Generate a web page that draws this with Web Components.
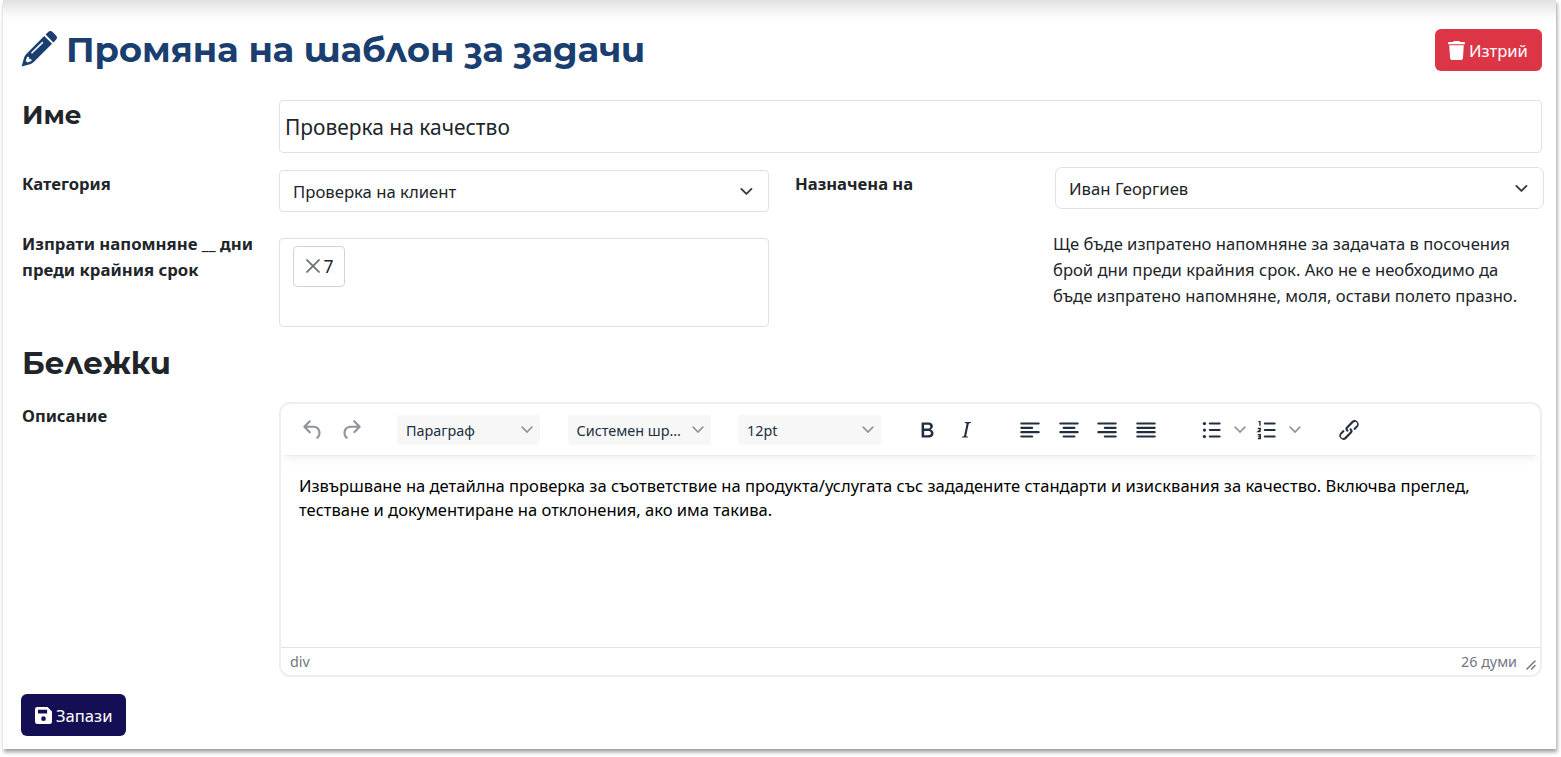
<!DOCTYPE html>
<html lang="bg">
<head>
<meta charset="utf-8">
<title>Промяна на шаблон за задачи</title>
<style>
  body {
    margin: 0;
    background: #ffffff;
    color: #212529;
    font-family: "Noto Sans", "Open Sans", sans-serif;
    font-size: 16.6px;
    overflow: hidden;
  }
</style>
</head>
<body>
<template-page></template-page>

<script>
(function () {
  const icons = {
    pencil: {
      box: "0 0 36 36",
      body: `<path fill="currentColor" d="M24.600 3.600 27.200 1c1.300-1.300 3.100-1.300 4.400 0l3.400 3.400c1.300 1.300 1.300 3.100 0 4.400L32.400 11.400z"/>
             <path fill="currentColor" d="M23.200 5 31 12.800 13 30.800Q11.300 32.500 9 33.200L.6 35.600 3 27Q3.700 24.500 5.300 22.900z"/>
             <path fill="none" stroke="#ffffff" stroke-width="1.600" stroke-linecap="round" d="M11 21.800 21.400 11.600"/>
             <path fill="#ffffff" d="M6.200 25.800 8.200 26v2.100l2.200.2.100 1.700-4.100 1.500-1.700-1.600z"/>`,
    },
    trash: {
      box: "0 0 16 18",
      body: `<path fill="currentColor" d="M5.400 0h5.200l.8 1H15.200a.8.8 0 0 1 .8.800V3H0V1.800A.8.800 0 0 1 .8 1H4.600zM1.100 4h13.800l-.8 12.300a1.800 1.800 0 0 1-1.800 1.700H3.700a1.800 1.800 0 0 1-1.800-1.700z"/>`,
    },
    save: {
      box: "0 0 16 16",
      body: `<path fill="currentColor" fill-rule="evenodd" d="M2.200 0h9.600l4.200 4.200v9.600a2.200 2.200 0 0 1-2.200 2.200H2.200A2.200 2.200 0 0 1 0 13.800V2.200A2.200 2.200 0 0 1 2.200 0zM2.800 2.500v3.700h8.600V2.500zM8 8.800a2.200 2.200 0 1 0 0 4.400 2.200 2.200 0 0 0 0-4.400z"/>`,
    },
    chevron: {
      box: "0 0 16 16",
      body: `<path fill="none" stroke="currentColor" stroke-width="2" stroke-linecap="round" stroke-linejoin="round" d="m2.500 5.200 5.400 5.400 5.400-5.400"/>`,
    },
    close: {
      box: "0 0 14 14",
      body: `<path fill="none" stroke="currentColor" stroke-width="1.700" d="M.5.500l13 13M13.500.500l-13 13"/>`,
    },
    caret: {
      box: "0 0 12 8",
      body: `<path fill="none" stroke="currentColor" stroke-width="1.700" stroke-linecap="round" d="m1.200 1.200 4.800 4.800 4.800-4.800"/>`,
    },
    undo: {
      box: "0 0 24 24",
      body: `<path fill="currentColor" d="M6.400 8H12c3.700 0 6.200 2 6.800 5.100.6 2.700-.4 5.600-2.300 6.800a1 1 0 0 1-1-1.800c1.100-.6 1.800-2.700 1.400-4.600-.5-2.100-2.100-3.500-4.900-3.500H6.400l3.300 3.300a1 1 0 1 1-1.400 1.400l-5-5a1 1 0 0 1 0-1.400l5-5a1 1 0 0 1 1.400 1.400L6.400 8Z"/>`,
    },
    redo: {
      box: "0 0 24 24",
      body: `<path fill="currentColor" d="M17.600 10H12c-2.800 0-4.400 1.400-4.900 3.500-.4 2 .3 4 1.400 4.600a1 1 0 1 1-1 1.800c-2-1.200-2.900-4.100-2.300-6.800.6-3 3-5.100 6.800-5.100h5.600l-3.300-3.300a1 1 0 1 1 1.400-1.400l5 5a1 1 0 0 1 0 1.400l-5 5a1 1 0 0 1-1.400-1.400l3.300-3.300Z"/>`,
    },
    bold: {
      box: "0 0 24 24",
      body: `<path fill="currentColor" fill-rule="evenodd" d="M7.800 19c-.3 0-.5 0-.6-.2l-.2-.5V5.700c0-.2 0-.4.2-.5l.6-.2h5c1.500 0 2.700.3 3.500 1 .7.600 1.100 1.400 1.100 2.500a3 3 0 0 1-.6 1.900c-.4.600-1 1-1.600 1.200.4.100.9.300 1.300.6s.8.700 1 1.200c.4.400.5 1 .5 1.600 0 1.300-.4 2.300-1.300 3-.8.700-2.100 1-3.800 1H7.800Zm5-8.300c.6 0 1.200-.1 1.600-.5.400-.3.600-.7.600-1.300 0-1.100-.8-1.700-2.300-1.700H9.300v3.500h3.400Zm.5 6c.7 0 1.300-.1 1.700-.4.400-.4.600-.9.600-1.500s-.2-1-.7-1.400c-.4-.3-1-.4-2-.4H9.400v3.800h4Z"/>`,
    },
    italic: {
      box: "0 0 24 24",
      body: `<path fill="currentColor" fill-rule="evenodd" d="m16.700 4.700-.1.900h-.3c-.6 0-1 0-1.400.3-.3.300-.4.600-.5 1.100l-2.100 9.800v.6c0 .5.400.8 1.400.8h.2l-.2.800H8l.2-.8h.2c1.100 0 1.800-.5 2-1.500l2-9.800.1-.5c0-.6-.4-.8-1.400-.8h-.3l.2-.9h5.800Z"/>`,
    },
    left: { box: "0 0 24 24", lines: [[4, 20, 6], [4, 14, 10], [4, 20, 14], [4, 14, 18]] },
    center: { box: "0 0 24 24", lines: [[4, 20, 6], [7, 17, 10], [4, 20, 14], [7, 17, 18]] },
    right: { box: "0 0 24 24", lines: [[4, 20, 6], [10, 20, 10], [4, 20, 14], [10, 20, 18]] },
    justify: { box: "0 0 24 24", lines: [[4, 20, 6], [4, 20, 10], [4, 20, 14], [4, 20, 18]] },
    bullets: {
      box: "0 0 24 24",
      lines: [[10, 19, 6], [10, 19, 12], [10, 19, 18]],
      body: `<g fill="currentColor"><circle cx="5" cy="6" r="1.500"/><circle cx="5" cy="12" r="1.500"/><circle cx="5" cy="18" r="1.500"/></g>`,
    },
    numbers: {
      box: "0 0 24 24",
      lines: [[10, 19, 6], [10, 19, 12], [10, 19, 18]],
      body: `<g fill="none" stroke="currentColor" stroke-width="1.300"><path d="M4 4.300h1.500V8"/><path d="M3.500 10.600h2.300v1.200L3.900 13.400h2.400"/><path d="M3.500 16.400h2.300v3.500H3.500M4 18.100h1.800"/></g>`,
    },
    link: {
      box: "0 0 24 24",
      body: `<path fill="currentColor" d="M6.200 12.300a1 1 0 0 1 1.400 1.400l-2 2a2 2 0 1 0 2.600 2.800l4.800-4.800a1 1 0 0 0 0-1.400 1 1 0 1 1 1.400-1.300 2.900 2.900 0 0 1 0 4L9.600 20a3.900 3.900 0 0 1-5.500-5.500l2-2Zm11.600-.6a1 1 0 0 1-1.400-1.400l2-2a2 2 0 1 0-2.600-2.800L11 10.300a1 1 0 0 0 0 1.400A1 1 0 1 1 9.600 13a2.900 2.900 0 0 1 0-4L14.400 4a3.900 3.900 0 0 1 5.500 5.500l-2 2Z"/>`,
    },
    resize: {
      box: "0 0 10 10",
      body: `<path fill="none" stroke="currentColor" stroke-width="1.500" stroke-linecap="round" d="M1 9 9 1M5.500 9 9 5.500"/>`,
    },
  };

  class UiIcon extends HTMLElement {
    connectedCallback() {
      const icon = icons[this.getAttribute("name")];
      const lines = (icon.lines || [])
        .map(([x1, x2, y]) => `M${x1} ${y}H${x2}`)
        .join("");
      this.attachShadow({ mode: "open" }).innerHTML = `
        <style>
          :host { display: block; flex: none; width: 26px; height: 26px; }
          svg { display: block; width: 100%; height: 100%; }
        </style>
        <svg viewBox="${icon.box}">
          ${lines ? `<path fill="none" stroke="currentColor" stroke-width="2" stroke-linecap="round" d="${lines}"/>` : ""}
          ${icon.body || ""}
        </svg>`;
    }
  }

  class PageHeading extends HTMLElement {
    connectedCallback() {
      this.attachShadow({ mode: "open" }).innerHTML = `
        <style>
          :host { display: block; white-space: nowrap; }
          h1, h2, h3 {
            margin: 0;
            font-family: Montserrat, Inter, "Noto Sans", sans-serif;
            font-weight: 700;
            line-height: 1.2;
          }
          h1 { color: #193e6f; font-size: 35.2px; }
          h2 { font-size: 30.8px; }
          h3 { font-size: 26.2px; }
        </style>
        <h${this.getAttribute("level")}><slot></slot></h${this.getAttribute("level")}>`;
    }
  }

  class ActionButton extends HTMLElement {
    connectedCallback() {
      this.attachShadow({ mode: "open" }).innerHTML = `
        <style>
          :host { display: block; }
          button {
            display: flex;
            align-items: center;
            gap: 4px;
            width: 100%;
            height: 42px;
            padding: 0 0 0 14px;
            border: 0;
            border-radius: 6px;
            background: #140f54;
            color: #ffffff;
            font: inherit;
            white-space: nowrap;
          }
          :host([variant="danger"]) button { background: #dc3545; padding-left: 13px; }
          ui-icon { width: 17px; height: 17px; }
          :host([variant="danger"]) ui-icon { height: 19px; }
        </style>
        <button type="button"><ui-icon name="${this.getAttribute("icon")}"></ui-icon><slot></slot></button>`;
    }
  }

  class TextField extends HTMLElement {
    connectedCallback() {
      this.attachShadow({ mode: "open" }).innerHTML = `
        <style>
          :host {
            display: flex;
            align-items: center;
            box-sizing: border-box;
            height: 53px;
            padding: 1px 5px 0;
            border: 1px solid #dee2e6;
            border-radius: 4px;
            font-size: 20.95px;
          }
        </style>
        <slot></slot>`;
    }
  }

  class SelectField extends HTMLElement {
    connectedCallback() {
      this.attachShadow({ mode: "open" }).innerHTML = `
        <style>
          :host {
            display: flex;
            align-items: center;
            justify-content: space-between;
            box-sizing: border-box;
            height: 42px;
            padding: 0 14px 0 13px;
            border: 1px solid #dee2e6;
            border-radius: var(--radius, 4px);
            font-size: 16.7px;
          }
          ui-icon { width: 15px; height: 15px; color: #343a40; }
        </style>
        <span><slot></slot></span>
        <ui-icon name="chevron"></ui-icon>`;
    }
  }

  class TagField extends HTMLElement {
    connectedCallback() {
      this.attachShadow({ mode: "open" }).innerHTML = `
        <style>
          :host {
            display: flex;
            align-items: flex-start;
            box-sizing: border-box;
            height: 89px;
            padding: 7px 13px;
            border: 1px solid #dee2e6;
            border-radius: 4px;
          }
          .tag {
            display: flex;
            align-items: center;
            gap: 4px;
            box-sizing: border-box;
            width: 52px;
            height: 41px;
            padding: 0 0 1px 11.5px;
            border: 1px solid #ced4da;
            border-radius: 4px;
            font-size: 17.5px;
          }
          ui-icon { width: 14px; height: 14px; color: #6c6f73; }
        </style>
        <div class="tag"><ui-icon name="close"></ui-icon><slot></slot></div>`;
    }
  }

  class FieldLabel extends HTMLElement {
    connectedCallback() {
      this.attachShadow({ mode: "open" }).innerHTML = `
        <style>
          :host { display: block; font-weight: 700; line-height: 26px; white-space: nowrap; }
        </style>
        <slot></slot>`;
    }
  }

  class ToolbarSelect extends HTMLElement {
    connectedCallback() {
      this.attachShadow({ mode: "open" }).innerHTML = `
        <style>
          :host {
            display: flex;
            align-items: center;
            justify-content: space-between;
            box-sizing: border-box;
            width: 143px;
            height: 30px;
            padding: 0 7px 0 9px;
            border-radius: 3px;
            background: #f7f7f7;
            color: #222f3e;
            font-size: 14.4px;
            white-space: nowrap;
          }
          span { margin-top: 1px; }
          ui-icon { width: 12px; height: 8px; color: #8f959c; }
        </style>
        <span><slot></slot></span>
        <ui-icon name="caret"></ui-icon>`;
    }
  }

  class RichEditor extends HTMLElement {
    connectedCallback() {
      this.attachShadow({ mode: "open" }).innerHTML = `
        <style>
          :host {
            display: flex;
            flex-direction: column;
            box-sizing: border-box;
            height: 275px;
            border: 2px solid #eeeeee;
            border-radius: 11px;
            overflow: hidden;
          }
          .toolbar {
            display: flex;
            align-items: center;
            flex: none;
            box-sizing: border-box;
            height: 51px;
            padding-left: 19px;
            color: #222f3e;
            box-shadow: 0 2px 2px -2px rgba(34, 47, 62, .1), 0 8px 8px -4px rgba(34, 47, 62, .07);
          }
          .group { display: flex; align-items: center; gap: 13px; }
          .history { color: #8f959c; margin-right: 33px; gap: 12px; }
          .selects { gap: 27.5px; margin-right: 33px; }
          .style { margin-right: 38px; }
          .align { gap: 12.7px; margin-right: 40px; }
          .lists { gap: 8.7px; margin-right: 35px; }
          .lists .arrow { width: 12px; height: 8px; color: #8f959c; }
          .content {
            flex: 1;
            padding: 19px 18px;
            color: #000000;
            font-size: 16.55px;
            line-height: 24px;
            white-space: nowrap;
          }
          .status {
            display: flex;
            align-items: center;
            flex: none;
            height: 27px;
            padding: 0 4px 0 9px;
            border-top: 1px solid #e3e3e3;
            color: #6f7781;
            font-size: 14.3px;
          }
          .count { margin-left: auto; }
          .status ui-icon { width: 10px; height: 10px; margin: 6px 0 0 9px; }
        </style>
        <div class="toolbar">
          <div class="group history">
            <ui-icon name="undo"></ui-icon>
            <ui-icon name="redo"></ui-icon>
          </div>
          <div class="group selects">
            <toolbar-select>Параграф</toolbar-select>
            <toolbar-select>Системен шр...</toolbar-select>
            <toolbar-select>12pt</toolbar-select>
          </div>
          <div class="group style">
            <ui-icon name="bold"></ui-icon>
            <ui-icon name="italic"></ui-icon>
          </div>
          <div class="group align">
            <ui-icon name="left"></ui-icon>
            <ui-icon name="center"></ui-icon>
            <ui-icon name="right"></ui-icon>
            <ui-icon name="justify"></ui-icon>
          </div>
          <div class="group lists">
            <ui-icon name="bullets"></ui-icon>
            <ui-icon class="arrow" name="caret"></ui-icon>
            <ui-icon name="numbers"></ui-icon>
            <ui-icon class="arrow" name="caret"></ui-icon>
          </div>
          <ui-icon name="link"></ui-icon>
        </div>
        <div class="content"><slot></slot></div>
        <div class="status">
          <span>div</span>
          <span class="count">${this.getAttribute("words")} думи</span>
          <ui-icon name="resize"></ui-icon>
        </div>`;
    }
  }

  class TemplatePage extends HTMLElement {
    connectedCallback() {
      this.attachShadow({ mode: "open" }).innerHTML = `
        <style>
          :host { display: block; height: 757px; }
          .card {
            box-sizing: border-box;
            width: 1553px;
            height: 749px;
            margin-left: 3px;
            padding: 29px 14px 0 19px;
            background: linear-gradient(#e0e0e0, #f0f0f0 9px, #fbfbfb 17px, #ffffff 25px);
            box-shadow: 1px 3px 4px rgba(0, 0, 0, .4);
          }
          header { display: flex; align-items: center; height: 42px; }
          header > ui-icon { width: 36px; height: 36px; margin: -2px 9px 0 -1px; color: #193e6f; }
          header page-heading { margin-top: 1px; }
          header action-button { width: 107px; margin-left: auto; }
          .row {
            display: grid;
            grid-template-columns: 257px 490px 26px 260px 1fr;
            align-items: start;
          }
          .wide { grid-column: 2 / -1; }
          .name { margin-top: 29px; height: 67px; }
          .pick { height: 67px; }
          .remind { height: 107px; }
          .assignee { --radius: 7px; grid-column: 5; margin-right: -2px; }
          .help { grid-column: 5; margin: -3px -12px 0 -2px; line-height: 26px; white-space: nowrap; }
          .save { width: 105px; margin: 17px 0 0 -1px; }
        </style>
        <div class="card">
          <header>
            <ui-icon name="pencil"></ui-icon>
            <page-heading level="1">Промяна на шаблон за задачи</page-heading>
            <action-button variant="danger" icon="trash">Изтрий</action-button>
          </header>
          <div class="row name">
            <page-heading level="3">Име</page-heading>
            <text-field class="wide">Проверка на качество</text-field>
          </div>
          <div class="row pick">
            <field-label style="margin-top: 4px">Категория</field-label>
            <select-field style="margin-top: 3px">Проверка на клиент</select-field>
            <i></i>
            <field-label style="margin-top: 4px">Назначена на</field-label>
            <select-field class="assignee">Иван Георгиев</select-field>
          </div>
          <div class="row remind">
            <field-label style="margin-top: -3px; font-size: 16.75px">Изпрати напомняне __ дни<br>преди крайния срок</field-label>
            <tag-field style="margin-top: 4px">7</tag-field>
            <div class="help">Ще бъде изпратено напомняне за задачата в посочения<br>брой дни преди крайния срок. Ако не е необходимо да<br>бъде изпратено напомняне, моля, остави полето празно.</div>
          </div>
          <page-heading level="2" style="height: 60px; margin-top: 4px">Бележки</page-heading>
          <div class="row" style="margin-top: -3px">
            <field-label style="margin-top: 1px">Описание</field-label>
            <rich-editor class="wide" words="26">Извършване на детайлна проверка за съответствие на продукта/услугата със зададените стандарти и изисквания за качество. Включва преглед,<br>тестване и документиране на отклонения, ако има такива.</rich-editor>
          </div>
          <action-button class="save" icon="save">Запази</action-button>
        </div>`;
    }
  }

  customElements.define("ui-icon", UiIcon);
  customElements.define("page-heading", PageHeading);
  customElements.define("action-button", ActionButton);
  customElements.define("text-field", TextField);
  customElements.define("select-field", SelectField);
  customElements.define("tag-field", TagField);
  customElements.define("field-label", FieldLabel);
  customElements.define("toolbar-select", ToolbarSelect);
  customElements.define("rich-editor", RichEditor);
  customElements.define("template-page", TemplatePage);
})();
</script>
</body>
</html>
